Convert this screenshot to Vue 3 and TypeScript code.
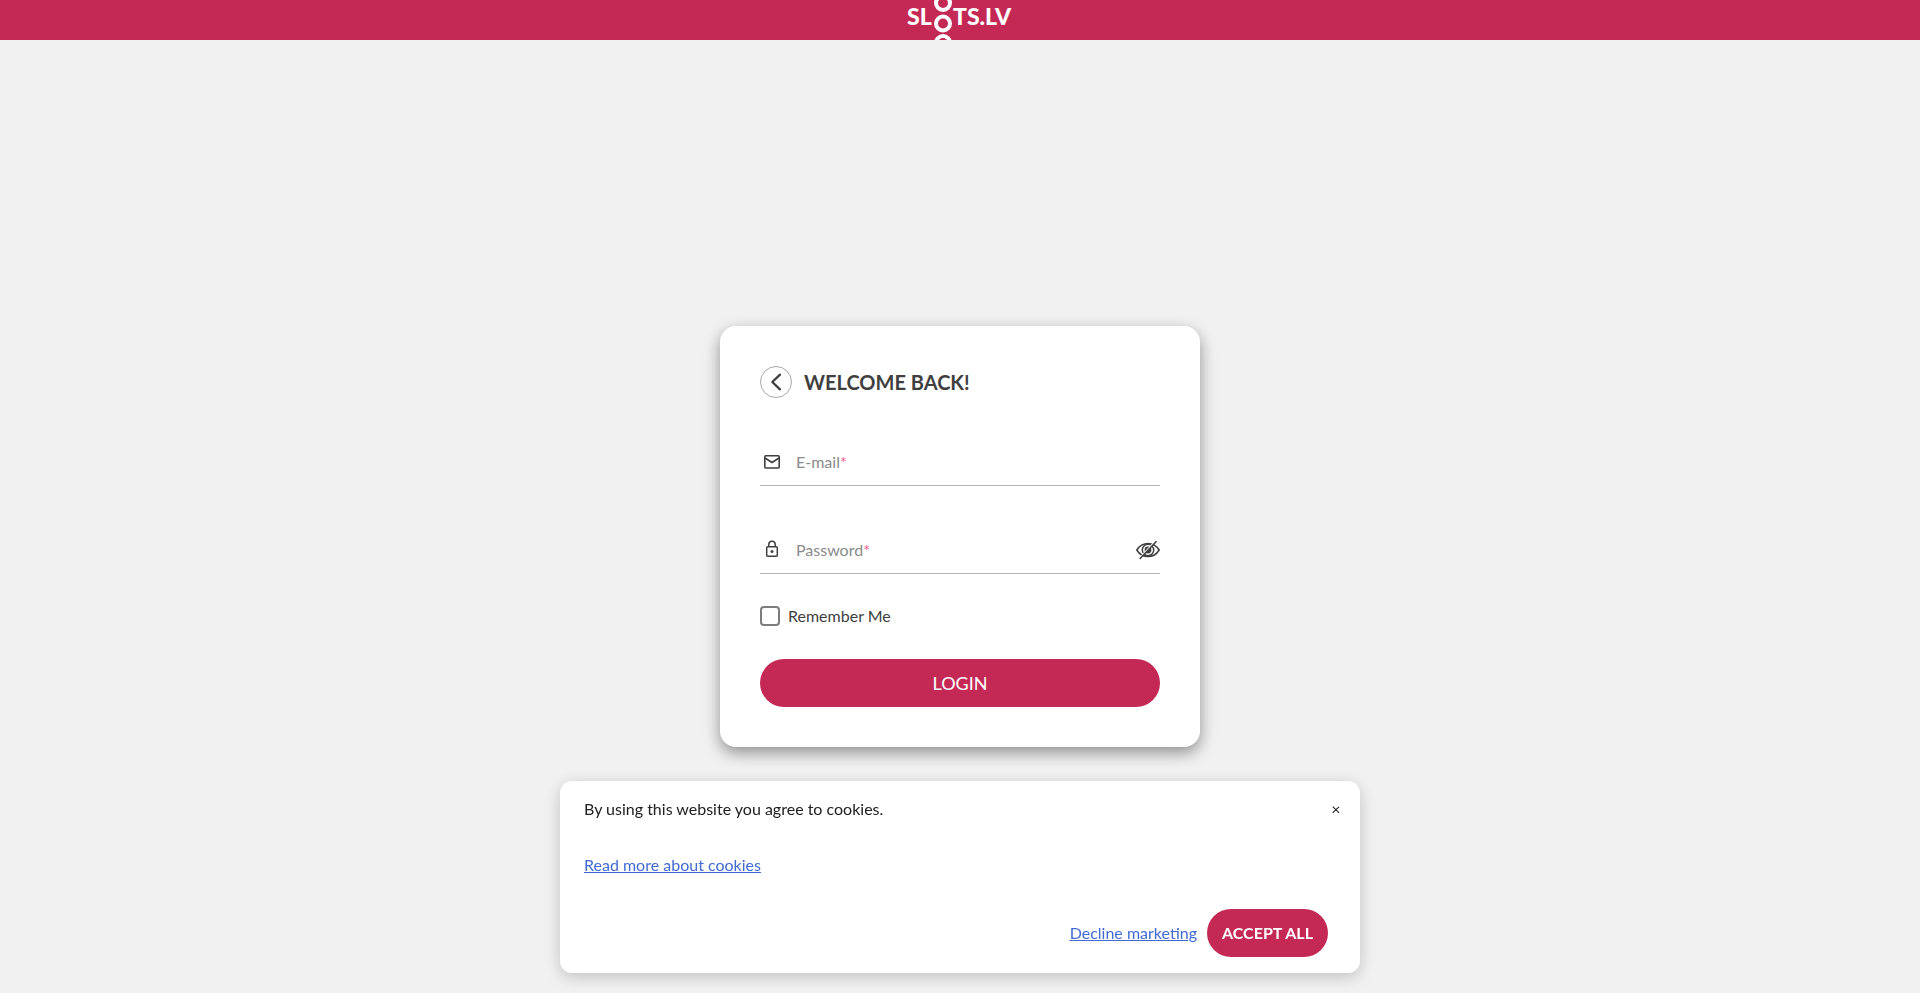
<script setup lang="ts">
import { ref } from 'vue'

const email = ref('')
const password = ref('')
const passwordVisible = ref(false)
const remember = ref(false)
const cookiesOpen = ref(true)
</script>

<template>
  <div class="page">
    <header class="topbar">
      <a class="logo" href="#" aria-label="SLOTS.LV">
        <svg width="108" height="40" viewBox="0 0 108 40" aria-hidden="true">
          <g fill="none" stroke="#fff" stroke-width="4">
            <circle cx="37" cy="3" r="7" />
            <circle cx="37" cy="23.500" r="7" />
            <circle cx="37" cy="43" r="7" />
          </g>
          <text class="logo-text" x="1" y="25">SL</text>
          <text class="logo-text" x="47" y="25">TS.LV</text>
        </svg>
      </a>
    </header>

    <main class="content">
      <form class="card" @submit.prevent>
        <div class="heading">
          <button class="back" type="button" aria-label="Back">
            <svg width="12" height="18" viewBox="0 0 12 18" fill="none" stroke="#3f3f3f" stroke-width="2.300" stroke-linecap="round" stroke-linejoin="round">
              <path d="M10 1.700 2.300 9l7.700 7.300" />
            </svg>
          </button>
          <h1>WELCOME BACK!</h1>
        </div>

        <div class="field">
          <svg class="icon" width="24" height="24" viewBox="0 0 24 24" fill="none" stroke="#3f3f3f" stroke-width="1.600" stroke-linejoin="round">
            <rect x="4.800" y="5.800" width="14.400" height="12.200" rx="1" />
            <path d="m5 8 7 4.500 7-4.500" />
          </svg>
          <input id="email" v-model="email" type="email" autocomplete="email" required />
          <label v-show="!email" for="email">E-mail<span>*</span></label>
        </div>

        <div class="field">
          <svg class="icon" width="24" height="24" viewBox="0 0 24 24" fill="none" stroke="#3f3f3f" stroke-width="1.500">
            <rect x="6.700" y="8.700" width="10.600" height="9.600" rx="1" />
            <path d="M8.800 8.700V6.500a3.200 3.200 0 0 1 6.400 0v2.200" />
            <circle cx="12" cy="13.500" r="1.500" fill="#3f3f3f" stroke="none" />
          </svg>
          <input id="password" v-model="password" :type="passwordVisible ? 'text' : 'password'" autocomplete="current-password" required />
          <label v-show="!password" for="password">Password<span>*</span></label>
          <button class="eye" type="button" aria-label="Toggle password visibility" @click="passwordVisible = !passwordVisible">
            <svg width="24" height="20" viewBox="0 0 24 20" fill="none" stroke="#3f3f3f" stroke-width="1.500">
              <path d="M.8 10C3.500 5.600 7.400 3.400 12 3.400S20.500 5.600 23.200 10c-2.700 4.400-6.600 6.600-11.200 6.600S3.500 14.400.8 10Z" />
              <circle cx="12" cy="10" r="5.700" />
              <circle cx="12" cy="10" r="3.400" fill="#3f3f3f" stroke="none" />
              <path d="M19.300 1 2.700 19" stroke="#fff" stroke-width="1.200" />
              <path d="M20.500 1.200 3.700 19" />
            </svg>
          </button>
        </div>

        <label class="remember">
          <input v-model="remember" type="checkbox" />
          Remember Me
        </label>

        <button class="login" type="submit">LOGIN</button>
      </form>
    </main>

    <section v-if="cookiesOpen" class="cookies" aria-label="Cookies">
      <div class="notice">
        <p>By using this website you agree to cookies.</p>
        <button class="close" type="button" aria-label="Close" @click="cookiesOpen = false">×</button>
      </div>
      <a class="more" href="#">Read more about cookies</a>
      <div class="actions">
        <a href="#">Decline marketing</a>
        <button class="accept" type="button" @click="cookiesOpen = false">ACCEPT ALL</button>
      </div>
    </section>
  </div>
</template>

<style>
body {
  margin: 0;
  background: #f1f1f1;
}
</style>

<style scoped>
.page {
  height: 100vh;
  overflow: hidden;
  background: #f1f1f1;
  color: #3f3f3f;
  font: 16px/24px Lato, "Liberation Sans", sans-serif;
}
.page *,
.page *::before {
  box-sizing: border-box;
}
button {
  padding: 0;
  border: 0;
  background: none;
  color: inherit;
  font: inherit;
  cursor: pointer;
}
svg {
  display: block;
}
.topbar {
  display: flex;
  justify-content: center;
  height: 40px;
  background: #c42956;
}
.logo-text {
  fill: #fff;
  font: 900 23px Lato, sans-serif;
}
.content {
  display: flex;
  align-items: center;
  justify-content: center;
  min-height: 100vh;
}
.card {
  width: 480px;
  max-width: 100%;
  padding: 40px;
  border-radius: 16px;
  background: #fff;
  box-shadow: 0 6px 16px rgba(0, 0, 0, 0.4);
}
.heading {
  display: flex;
  align-items: center;
  gap: 12px;
}
.back {
  display: flex;
  align-items: center;
  justify-content: center;
  width: 32px;
  height: 32px;
  border: 1px solid #a8a8a8;
  border-radius: 50%;
}
h1 {
  margin: 0;
  font-size: 20px;
  line-height: 32px;
  font-weight: 700;
}
.field {
  display: grid;
  grid-template-columns: 24px 1fr auto;
  column-gap: 12px;
  align-items: center;
  height: 48px;
  margin-top: 40px;
  border-bottom: 1px solid #b3b3b3;
}
.field input,
.field label {
  grid-area: 1 / 2;
}
.field input {
  width: 100%;
  height: 40px;
  padding: 0;
  border: 0;
  outline: 0;
  background: none;
  color: inherit;
  font: inherit;
}
.field label {
  justify-self: start;
  color: #8a8a8a;
  pointer-events: none;
}
.field label span {
  color: #ec5c8a;
}
.eye {
  grid-area: 1 / 3;
}
.remember {
  display: flex;
  align-items: center;
  gap: 8px;
  margin: 32px 0 33px;
  line-height: 20px;
}
.remember input {
  appearance: none;
  width: 20px;
  height: 20px;
  margin: 0;
  border: 2px solid #7d7d7d;
  border-radius: 4px;
}
.remember input:checked {
  background: #c42956;
}
.login {
  display: block;
  width: 100%;
  height: 48px;
  border-radius: 24px;
  background: #c42956;
  color: #fff;
  font-size: 18px;
}
.cookies {
  position: fixed;
  bottom: 20px;
  left: 50%;
  width: 800px;
  max-width: 100%;
  padding: 16px 32px 16px 24px;
  transform: translateX(-50%);
  border-radius: 12px;
  background: #fff;
  color: #212121;
  box-shadow: 0 4px 16px rgba(0, 0, 0, 0.2);
}
.notice {
  display: flex;
  justify-content: space-between;
  margin-right: -16px;
}
.notice p {
  margin: 0;
}
.close {
  width: 16px;
}
.cookies a {
  color: #416bd2;
}
.more {
  display: inline-block;
  margin-top: 32px;
}
.actions {
  display: flex;
  align-items: center;
  justify-content: flex-end;
  gap: 10px;
  margin-top: 32px;
}
.accept {
  height: 48px;
  padding: 0 15px;
  border-radius: 24px;
  background: #c42956;
  color: #fff;
  font-weight: 700;
}
</style>
